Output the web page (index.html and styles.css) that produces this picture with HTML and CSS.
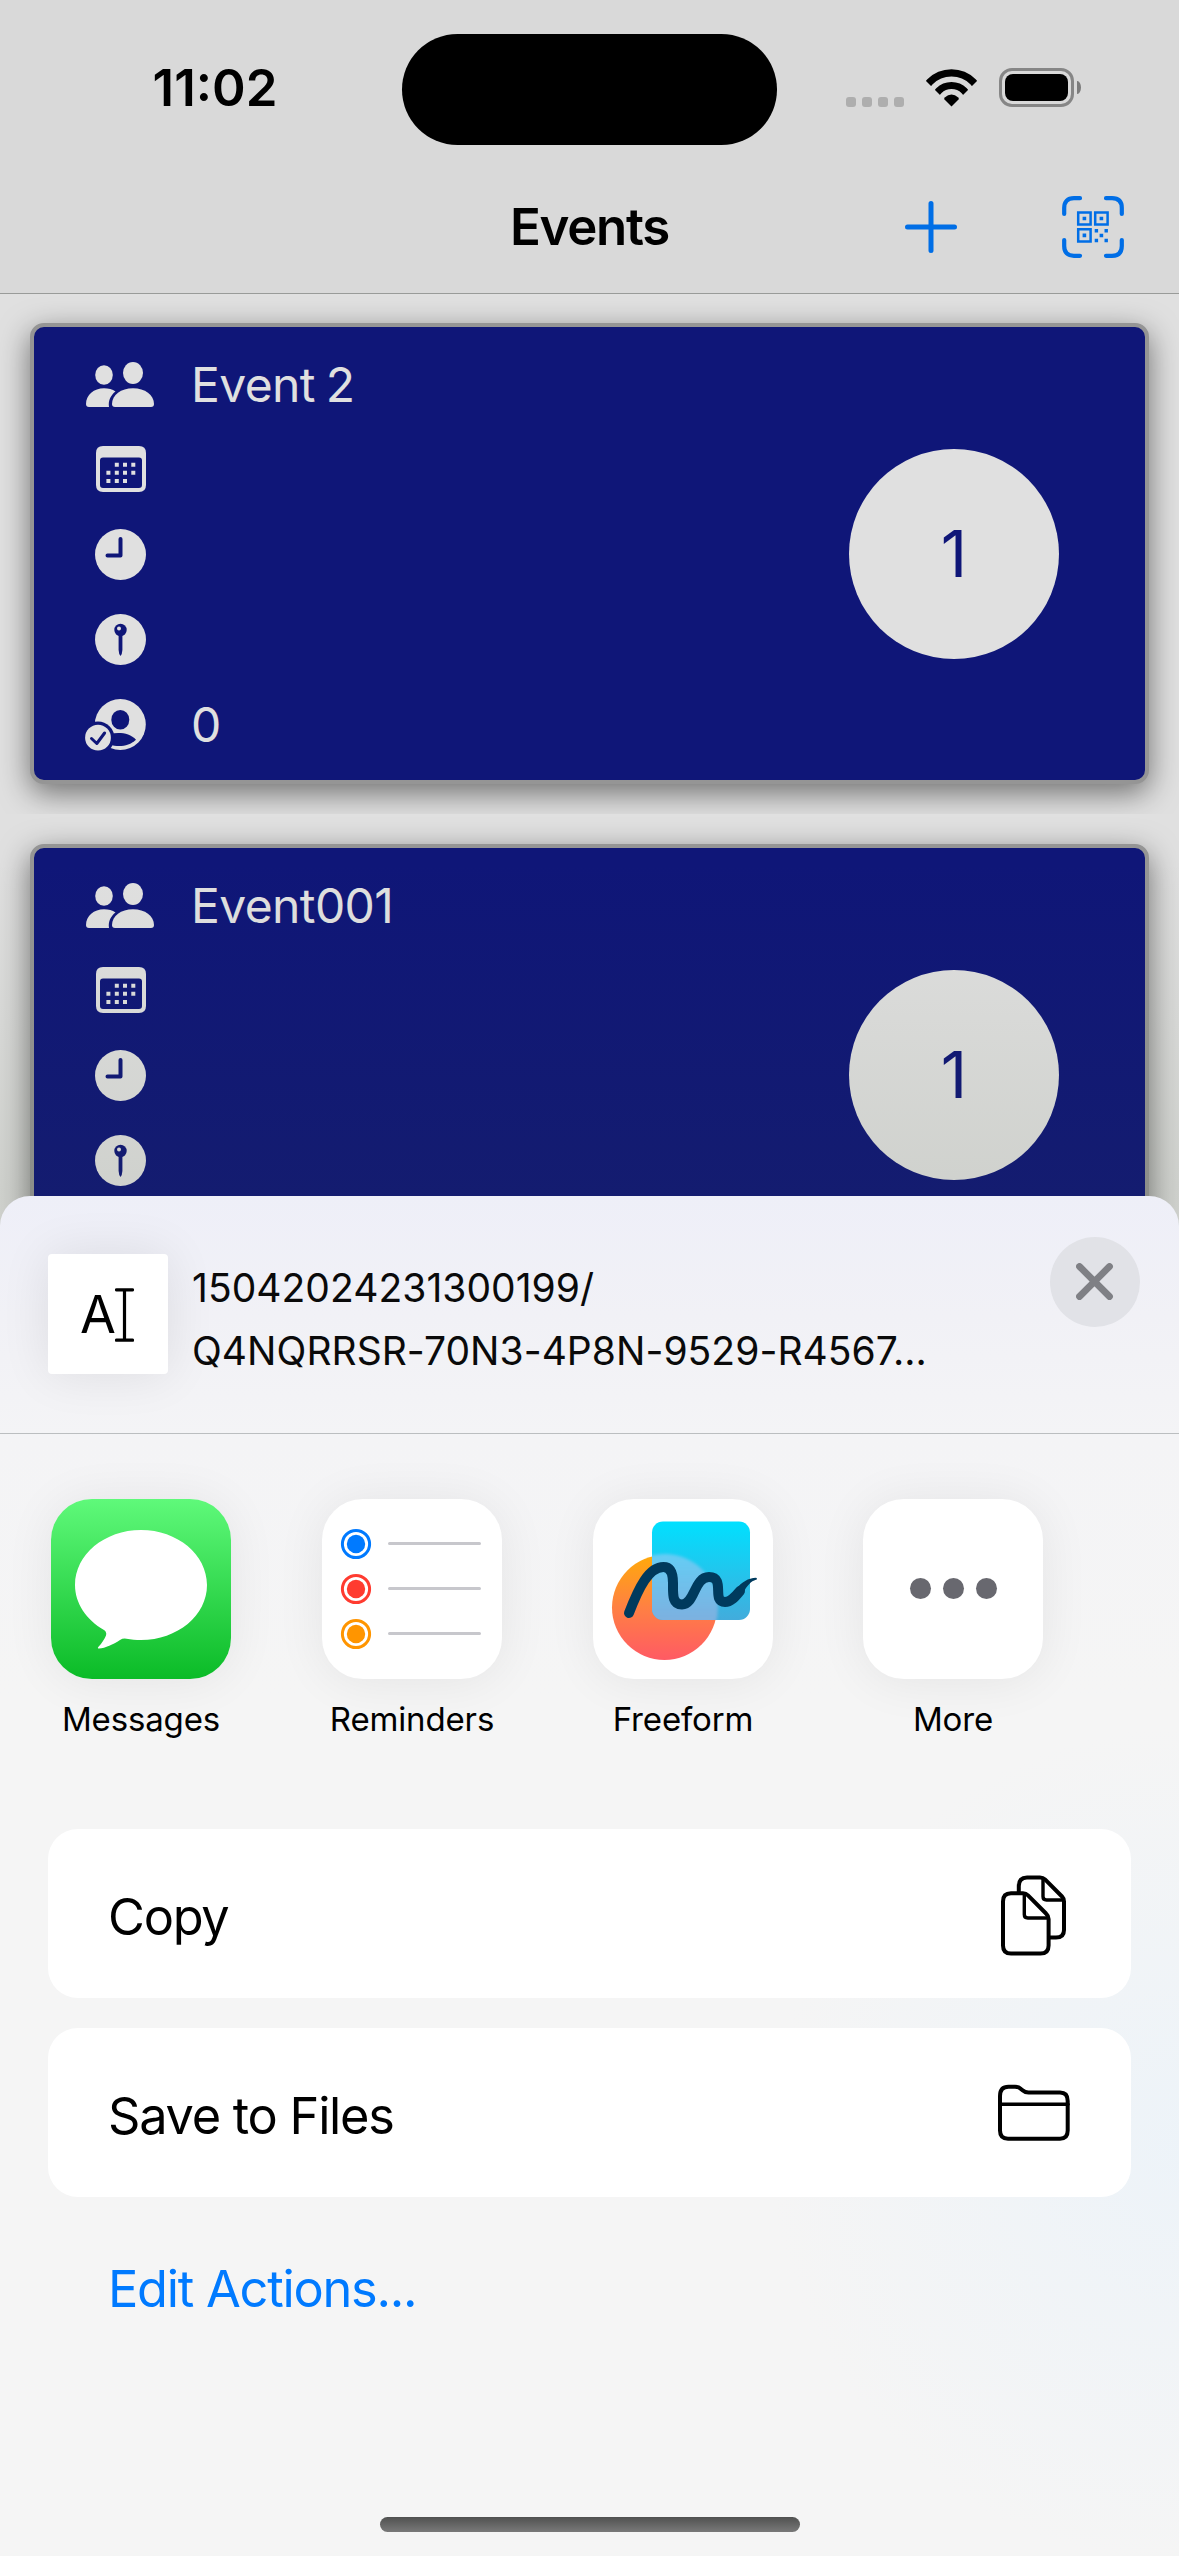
FILE: index.html
```html
<!DOCTYPE html>
<html lang="en">
<head>
<meta charset="utf-8">
<title>Events</title>
<link rel="stylesheet" href="styles.css">
</head>
<body>
<svg class="defs" aria-hidden="true">
  <symbol id="people" viewBox="0 0 68 45">
    <ellipse cx="18" cy="13" rx="8.800" ry="9.800"/>
    <ellipse cx="47" cy="11" rx="10" ry="11"/>
    <path d="M0 42C0 33 8 26.300 18 26.300C22.500 26.300 26.500 27.400 29.500 29.600C25 33 22 38.500 23 45H3Q0 45 0 42Z"/>
    <path d="M26 42C26 33 35 26.300 47 26.300C59 26.300 68 33 68 42Q68 45 65 45H29Q26 45 26 42Z"/>
  </symbol>
  <symbol id="calendar" viewBox="0 0 50 46">
    <path fill-rule="evenodd" d="M7 0H43Q50 0 50 7V39Q50 46 43 46H7Q0 46 0 39V7Q0 0 7 0ZM7 11.500Q4 11.500 4 14.500V39Q4 42 7 42H43Q46 42 46 39V14.500Q46 11.500 43 11.500Z"/>
    <path d="M18.800 16.800h4v4h-4zM27 16.800h4v4h-4zM35.300 16.800h4v4h-4zM10.400 24.800h4v4h-4zM18.800 24.800h4v4h-4zM27 24.800h4v4h-4zM35.300 24.800h4v4h-4zM10.400 33h4v4h-4zM18.800 33h4v4h-4zM27 33h4v4h-4z"/>
  </symbol>
  <symbol id="clock" viewBox="0 0 51 51">
    <circle cx="25.500" cy="25.500" r="25.500"/>
    <path class="cut-line" d="M25.500 10V26.500H12.500"/>
  </symbol>
  <symbol id="pin" viewBox="0 0 51 51">
    <circle cx="25.500" cy="25.500" r="25.500"/>
    <circle class="cut" cx="25.500" cy="16" r="6.200"/>
    <circle cx="24" cy="14.400" r="2"/>
    <path class="cut" d="M23.600 20H27.400V36Q27.200 40 25.500 42Q23.800 40 23.600 36Z"/>
  </symbol>
  <symbol id="checked-in" viewBox="0 0 61 52">
    <circle cx="35.300" cy="25.500" r="25.500"/>
    <ellipse class="cut" cx="35.300" cy="20.700" rx="9" ry="9.800"/>
    <path class="cut" d="M25 35C34 33 45 34 51 40.800C44 47.500 33 48.500 25 45.500Z"/>
    <circle class="cut" cx="13" cy="38.700" r="16.300"/>
    <circle cx="13" cy="38.700" r="12.900"/>
    <path class="cut-line thin" d="M6.500 39.500L11.800 44.500L19.600 34"/>
  </symbol>
</svg>

<main class="app">
  <header class="header">
    <div class="status">
      <div class="time">11:02</div>
      <div class="island"></div>
      <div class="indicators">
        <div class="signal"><i></i><i></i><i></i><i></i></div>
        <svg class="wifi" width="51" height="38" viewBox="0 0 51 38">
          <clipPath id="wedge"><path d="M25.500 37.500L-2 10V-5H53V10Z"/></clipPath>
          <g clip-path="url(#wedge)">
            <circle cx="25.500" cy="34.500" r="30.600" fill="none" stroke="#000" stroke-width="7.200"/>
            <circle cx="25.500" cy="34.500" r="18" fill="none" stroke="#000" stroke-width="7.200"/>
            <circle cx="25.500" cy="34.500" r="9"/>
          </g>
        </svg>
        <div class="battery"><div class="charge"></div></div>
        <div class="nub"></div>
      </div>
    </div>
    <nav class="nav">
      <span></span>
      <h1>Events</h1>
      <div class="nav-actions">
        <svg width="52" height="52" viewBox="0 0 52 52"><path d="M26 2.500V49.500M2.500 26H49.500" stroke-width="5"/></svg>
        <svg width="62" height="62" viewBox="0 0 62 62">
          <path stroke-width="4.200" d="M18 2.200H12Q2.200 2.200 2.200 12V18M44 2.200H50Q59.800 2.200 59.800 12V18M18 59.800H12Q2.200 59.800 2.200 50V44M44 59.800H50Q59.800 59.800 59.800 50V44"/>
          <path stroke-width="2.500" d="M16.200 16.400H28.600V28.600H16.200ZM33.200 16.400H45.600V28.600H33.200ZM16.200 33.300H28.600V45.500H16.200Z"/>
          <path class="solid" d="M20.600 20.700h3.600v3.600h-3.600zM37.600 20.700h3.600v3.600h-3.600zM20.600 37.600h3.600v3.600h-3.600zM32.700 33h3.400v3.400h-3.400zM42.500 33h3.400v3.400h-3.400zM37.600 37.700h3.600v3.600h-3.600zM32.700 42.800h3.400v3.400h-3.400zM42.500 42.800h3.400v3.400h-3.400z"/>
        </svg>
      </div>
    </nav>
  </header>

  <section class="cell">
    <article class="card">
      <ul class="facts">
        <li><svg class="wide" width="68" height="45"><use href="#people"/></svg><span>Event 2</span></li>
        <li><svg class="raised" width="50" height="46"><use href="#calendar"/></svg></li>
        <li><svg width="51" height="51"><use href="#clock"/></svg></li>
        <li><svg width="51" height="51"><use href="#pin"/></svg></li>
        <li><svg class="badge-left" width="61" height="52"><use href="#checked-in"/></svg><span>0</span></li>
      </ul>
      <div class="count">1</div>
    </article>
  </section>
  <section class="cell">
    <article class="card">
      <ul class="facts">
        <li><svg class="wide" width="68" height="45"><use href="#people"/></svg><span>Event001</span></li>
        <li><svg class="raised" width="50" height="46"><use href="#calendar"/></svg></li>
        <li><svg width="51" height="51"><use href="#clock"/></svg></li>
        <li><svg width="51" height="51"><use href="#pin"/></svg></li>
        <li></li>
      </ul>
      <div class="count">1</div>
    </article>
  </section>
  <div class="shade"></div>
</main>

<aside class="sheet">
  <header class="sheet-head">
    <div class="thumb"><span>A</span><svg width="19" height="54" viewBox="0 0 19 54"><path d="M1.500 1.800H17.500M1.500 52.200H17.500M9.500 2V52" fill="none" stroke="#000" stroke-width="3.200" stroke-linecap="round"/></svg></div>
    <p class="subject">15042024231300199/<br>Q4NQRRSR-70N3-4P8N-9529-R4567...</p>
    <div class="close"><svg width="38" height="38" viewBox="0 0 38 38"><path d="M3.500 3.500L33.500 33.500M33.500 3.500L3.500 33.500" stroke="#7f8085" stroke-width="6.800" stroke-linecap="round"/></svg></div>
  </header>

  <div class="apps">
    <div class="app-item">
      <svg class="app-icon messages" viewBox="0 0 180 180"><path fill="#fff" d="M90 31C126.500 31 156 55.600 156 86C156 116.400 126.500 141 90 141C85 141 80 140.600 75.500 139.700Q72 139 69 141C62 145.500 54.500 149 48 149.600Q46 149.300 47.500 147.700C51 144 53.500 140 55 136.500Q56 133 53 131C35.500 121 24 104.500 24 86C24 55.600 53.500 31 90 31Z"/></svg>
      <span>Messages</span>
    </div>
    <div class="app-item">
      <svg class="app-icon" viewBox="0 0 180 180">
        <g fill="none" stroke-width="3"><circle cx="34" cy="45" r="13.600" stroke="#007aff"/><circle cx="34" cy="90" r="13.600" stroke="#ff3b30"/><circle cx="34" cy="135" r="13.600" stroke="#ff9500"/></g>
        <circle cx="34" cy="45" r="9.200" fill="#007aff"/><circle cx="34" cy="90" r="9.200" fill="#ff3b30"/><circle cx="34" cy="135" r="9.200" fill="#ff9500"/>
        <path d="M67.500 44.500H157.500M67.500 89.500H157.500M67.500 134.500H157.500" stroke="#c7c7cc" stroke-width="3" stroke-linecap="round"/>
      </svg>
      <span>Reminders</span>
    </div>
    <div class="app-item">
      <svg class="app-icon" viewBox="0 0 180 180">
        <defs>
          <linearGradient id="sun" x1="0" y1="0" x2="0" y2="1"><stop offset="0" stop-color="#ffaa0a"/><stop offset=".5" stop-color="#ff8043"/><stop offset="1" stop-color="#ff5a64"/></linearGradient>
          <linearGradient id="sky" x1="0" y1="0" x2="0" y2="1"><stop offset="0" stop-color="#00e0ff"/><stop offset="1" stop-color="#42acdc"/></linearGradient>
          <linearGradient id="mix" x1="0" y1="0" x2="0" y2="1"><stop offset="0" stop-color="#64cdf5"/><stop offset=".6" stop-color="#7bb1e0"/></linearGradient>
          <clipPath id="pane"><rect x="59" y="22.500" width="98" height="98.500" rx="11"/></clipPath>
          <filter id="frost"><feGaussianBlur stdDeviation="1.800"/></filter>
        </defs>
        <circle cx="71.500" cy="108.500" r="52.500" fill="url(#sun)"/>
        <rect x="59" y="22.500" width="98" height="98.500" rx="11" fill="url(#sky)"/>
        <g clip-path="url(#pane)"><circle cx="71.500" cy="108.500" r="53.500" fill="url(#mix)" filter="url(#frost)"/></g>
        <path d="M36 114C46 88 56 68 70.500 68C78 68 80 75 80 84C80 95 79 105.500 89 105.500C102 105.500 101 78 116 78C133 78 118 103 132 103C138 103 142 98 147 92" fill="none" stroke="#003a5d" stroke-width="10" stroke-linecap="round"/>
        <path d="M143 90C149 83 155 79 163 78.700Q165 80 163 80.800C158 82 154 87 150 94Z" fill="#003a5d"/>
      </svg>
      <span>Freeform</span>
    </div>
    <div class="app-item">
      <svg class="app-icon" viewBox="0 0 180 180" fill="#68686f"><circle cx="57.500" cy="89.500" r="10.500"/><circle cx="90.500" cy="89.500" r="10.500"/><circle cx="123.500" cy="89.500" r="10.500"/></svg>
      <span>More</span>
    </div>
  </div>

  <div class="actions">
    <div class="action"><span>Copy</span>
      <svg width="65" height="81" viewBox="0 0 65 81"><path d="M17.800 17V11Q17.800 2.400 26 2.400H39Q42 2.400 44 4.400L61 21.500Q63 23.500 63 26.500V55Q63 62.600 55 62.600H50M10 18.300H22Q25 18.300 27 20.300L45 38.500Q47.600 41 47.600 44V70.500Q47.600 78.600 39.500 78.600H10Q2 78.600 2 70.500V26.500Q2 18.300 10 18.300Z"/><path class="fold" d="M42 4V21.500Q42 25 45.500 25H61M23.300 20V39.500Q23.300 43 26.800 43H46"/></svg>
    </div>
    <div class="action"><span>Save to Files</span>
      <svg class="folder" width="72" height="57" viewBox="0 0 72 57"><path d="M2 12Q2 2.700 10.500 2.700H17Q20.500 2.700 23 5L24.500 6.300Q27 8.600 30.500 8.600H62Q69.700 8.600 69.700 17V46.500Q69.700 54.700 62 54.700H10Q2 54.700 2 46.500Z"/><path class="fold" d="M2 20.200H70"/></svg>
    </div>
    <div class="edit">Edit Actions...</div>
  </div>
  <div class="home"></div>
</aside>
</body>
</html>
```
FILE: styles.css
```css
* { box-sizing: border-box; }

body {
  position: relative;
  width: 1179px;
  height: 2556px;
  margin: 0;
  overflow: hidden;
  background: #e0e0e0;
  color: #000;
  font-family: Inter, "Liberation Sans", sans-serif;
  font-size: 51px;
}

svg { display: block; flex: none; }
.defs { position: absolute; width: 0; height: 0; }

.app { position: relative; height: 1300px; overflow: hidden; }

.header {
  position: relative;
  z-index: 2;
  height: 294px;
  background: #d9d9d9;
  border-bottom: 1px solid #999b99;
}

.status {
  display: grid;
  grid-template-columns: 402px 375px 402px;
  align-items: center;
  height: 177px;
}
.time {
  padding: 0 0 2px 28px;
  text-align: center;
  font-weight: 600;
}
.island { height: 111px; margin-top: 1px; border-radius: 56px; background: #000; }
.indicators { display: flex; align-items: center; padding: 0 0 2px 69px; }
.signal { display: flex; gap: 6px; padding-top: 28px; }
.signal i { width: 10px; height: 10px; border-radius: 3px; background: #aeaeae; }
.wifi { margin: 0 22px; }
.battery {
  width: 75px;
  height: 39px;
  padding: 3px;
  border: 3px solid #868686;
  border-radius: 13px;
}
.charge { height: 27px; border-radius: 8px; background: #000; }
.nub { width: 4px; height: 13px; margin-left: 3px; border-radius: 0 4px 4px 0 / 0 7px 7px 0; background: #7c7c7c; }

.nav {
  display: grid;
  grid-template-columns: 1fr auto 1fr;
  align-items: center;
  height: 100px;
}
.nav h1 { margin: 0; padding-bottom: 2px; font-size: 51px; font-weight: 600; letter-spacing: -1.300px; }
.nav-actions {
  display: flex;
  align-items: center;
  justify-content: flex-end;
  gap: 105px;
  padding-right: 55px;
}
.nav-actions path { fill: none; stroke: #006ee6; stroke-linecap: round; }
.nav-actions .solid { fill: #006ee6; stroke: none; }

.cell { position: relative; padding: 30px; background: #e0e0e0; }
.header + .cell { padding-top: 29px; }
.card {
  display: flex;
  align-items: center;
  justify-content: space-between;
  height: 461px;
  padding: 0 86px 0 42px;
  border: 4px solid #959595;
  border-radius: 14px;
  background: #0f1678;
  box-shadow: 0 9px 30px rgba(0, 0, 0, 0.5);
}
.facts {
  display: grid;
  grid-auto-rows: 85px;
  margin: 0;
  padding: 2px 0 0;
  list-style: none;
  color: #e0e0e0;
}
.facts li {
  display: grid;
  grid-template-columns: 89px auto;
  column-gap: 26px;
  align-items: center;
  justify-items: center;
}
.facts svg { fill: #e0e0e0; }
.facts .wide { margin-right: 1px; }
.facts .raised { margin-bottom: 1px; }
.facts .badge-left { margin-right: 10px; }
.facts span {
  justify-self: start;
  padding-bottom: 1px;
  font-size: 48px;
  font-weight: 400;
  letter-spacing: -0.600px;
  word-spacing: -2px;
}
.cut { fill: #0f1678; }
.cut-line { fill: none; stroke: #0f1678; stroke-width: 4; stroke-linecap: round; stroke-linejoin: round; }
.cut-line.thin { stroke-width: 3; }
.count {
  display: grid;
  place-items: center;
  width: 210px;
  height: 210px;
  border-radius: 50%;
  background: #e0e0e0;
  color: #0f1678;
  font-size: 65px;
}
.shade {
  position: absolute;
  inset: 860px 0 0;
  background: linear-gradient(rgba(60, 80, 40, 0), rgba(60, 80, 40, 0.1) 330px);
}

.sheet {
  position: absolute;
  inset: 1196px 0 0;
  display: flex;
  flex-direction: column;
  border-radius: 30px 30px 0 0;
  background:
    radial-gradient(ellipse 420px 420px at 1190px 950px, rgba(236, 243, 249, 0.9), rgba(241, 244, 247, 0)),
    linear-gradient(#eeeff8, #f1f1f6 120px, #f4f4f6 240px, #f5f5f5 500px);
}
.sheet-head {
  display: flex;
  height: 238px;
  padding: 58px 39px 0 48px;
  border-bottom: 1px solid #bbbec0;
}
.thumb {
  display: flex;
  align-items: center;
  width: 120px;
  height: 120px;
  padding: 1px 0 0 32px;
  border-radius: 4px;
  background: #fff;
  box-shadow: 0 0 50px rgba(0, 0, 0, 0.09);
}
.thumb span { width: 35px; font-size: 52px; letter-spacing: -1px; }
.subject {
  flex: 1;
  margin: 2px 0 0 24px;
  color: #0a0a0a;
  font-size: 39px;
  line-height: 63px;
  letter-spacing: 0.040px;
}
.close {
  display: grid;
  place-items: center;
  width: 90px;
  height: 90px;
  margin-top: -17px;
  border-radius: 50%;
  background: #e1e2e7;
}

.apps { display: flex; gap: 91px; padding: 65px 0 0 51px; }
.app-item {
  display: flex;
  flex-direction: column;
  align-items: center;
  width: 180px;
  font-size: 33px;
  line-height: 40px;
  letter-spacing: -0.150px;
}
.app-item:last-child { margin-left: -1px; }
.app-icon {
  width: 180px;
  height: 180px;
  margin-bottom: 20px;
  border-radius: 41px;
  background: #fff;
  box-shadow: 0 2px 50px rgba(0, 0, 0, 0.07);
}
.messages { background: linear-gradient(#5ff97a, #0bbb27); }

.actions { display: flex; flex-direction: column; gap: 30px; padding: 90px 48px 0; }
.action {
  display: flex;
  align-items: center;
  justify-content: space-between;
  height: 169px;
  padding: 3px 65px 0 60px;
  border-radius: 30px;
  background: #fff;
}
.action span, .edit { font-size: 50.500px; letter-spacing: -1.250px; }
.action span { padding-top: 2px; }
.action path { fill: none; stroke: #000; stroke-width: 4; stroke-linecap: round; }
.action .fold { stroke-width: 3.400; }
.folder { margin: -4px -4px 0 0; }
.edit { padding: 31px 0 0 60px; color: #007aff; }

.home {
  width: 420px;
  height: 15px;
  margin: auto auto 24px;
  border-radius: 8px;
  background: linear-gradient(#505150, #797979);
}
```
